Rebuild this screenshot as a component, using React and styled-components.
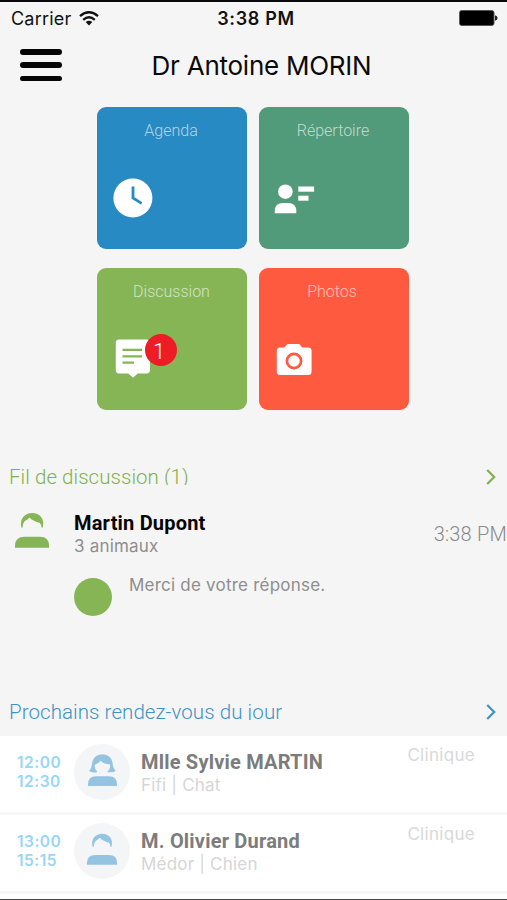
import styled, { createGlobalStyle } from "styled-components";

const GlobalStyle = createGlobalStyle`
    html, body {
        margin: 0;
        padding: 0;
        background-color: #f5f5f5;
    }
    * {
        box-sizing: border-box;
    }
`;

const inter = `Inter, "Liberation Sans", sans-serif`;
const roboto = `Roboto, "Liberation Sans", sans-serif`;

// page
const PageContainer = styled.div`
    width: 507px;
    height: 900px;
    display: flex;
    flex-direction: column;
    overflow: hidden;
    background-color: #f5f5f5;
    border-top: 2px solid #0a0a0c;
    border-bottom: 1px solid #444;
    font-family: ${inter};
`;

// status bar
const StatusBar = styled.div`
    height: 34px;
    display: grid;
    grid-template-columns: 1fr auto 1fr;
    align-items: center;
    padding: 0 9px 2px 11px;
    font-size: 18px;
    line-height: 22px;
    color: #111;
`;

const Carrier = styled.div`
    display: flex;
    align-items: center;
    gap: 8px;
    letter-spacing: 0.2px;

    span {
        padding-top: 1px;
    }
`;

const Clock = styled.div`
    padding: 1px 0 0 3px;
    font-weight: 600;
    letter-spacing: 0.65px;
`;

const BatteryArea = styled.div`
    display: flex;
    justify-content: flex-end;
`;

// header
const Header = styled.div`
    height: 58px;
    display: grid;
    grid-template-columns: 62px 1fr 62px;
    align-items: center;
    margin-bottom: 13px;
`;

const MenuButton = styled.button`
    width: 42px;
    height: 32px;
    margin-left: 20px;
    padding: 0;
    display: flex;
    flex-direction: column;
    justify-content: space-between;
    border: none;
    background: none;
`;

const MenuBar = styled.span`
    width: 42px;
    height: 5.5px;
    border-radius: 3px;
    background-color: #050505;
`;

const Title = styled.h1`
    margin: 0;
    padding: 2px 0 0 16px;
    text-align: center;
    font-size: 26px;
    font-weight: 400;
    line-height: 32px;
    letter-spacing: -0.25px;
    white-space: nowrap;
    color: #0a0a0a;
`;

// tiles
const TileGrid = styled.div`
    display: grid;
    grid-template-columns: 150px 150px;
    grid-auto-rows: 142px;
    gap: 19px 12px;
    margin-left: 97px;
`;

const Tile = styled.div`
    display: flex;
    flex-direction: column;
    border-radius: 9px;
    background-color: ${(props) => props.$color};
`;

const TileLabel = styled.div`
    padding: 14px ${(props) => props.$shift || "2px"} 0 0;
    height: 66px;
    text-align: center;
    font-family: ${roboto};
    font-size: 16px;
    font-weight: 300;
    line-height: 20px;
    color: rgba(255, 255, 255, 0.65);
`;

const TileIcon = styled.div`
    position: relative;
    margin-left: 12px;
    width: 48px;
    height: 50px;
`;

const Badge = styled.div`
    position: absolute;
    left: 35.5px;
    top: 0;
    width: 32px;
    height: 32px;
    border-radius: 50%;
    background-color: #ee1c25;
    font-family: ${roboto};
    font-size: 22px;
    font-weight: 300;
    line-height: 36px;
    text-align: center;
    padding-right: 3px;
    color: white;
`;

// section titles
const SectionHeader = styled.div`
    height: 26px;
    margin-top: ${(props) => props.$top};
    padding: 0 11px 0 9px;
    display: flex;
    align-items: center;
    justify-content: space-between;
    color: ${(props) => props.$color};
`;

const SectionTitle = styled.div`
    height: 20px;
    margin-bottom: 4px;
    overflow: hidden;
    font-family: ${roboto};
    font-size: 20.5px;
    font-weight: 300;
    line-height: 24px;
    letter-spacing: ${(props) => props.$spacing};
    white-space: nowrap;
`;

// discussion thread
const Thread = styled.div`
    height: 55px;
    margin-top: 14px;
    padding-left: 14px;
    display: flex;
`;

const ThreadAvatar = styled.div`
    width: 60px;
    padding-top: 8px;
`;

const ThreadInfo = styled.div`
    flex: 1;
    padding-top: 7px;
`;

const ThreadName = styled.div`
    font-family: ${roboto};
    font-size: 20px;
    font-weight: 700;
    line-height: 24px;
    letter-spacing: 0.2px;
    white-space: nowrap;
    color: #050505;
`;

const ThreadDetail = styled.div`
    font-size: 17px;
    line-height: 22px;
    letter-spacing: 0.2px;
    color: #8e8e8e;
`;

const ThreadTime = styled.div`
    padding: 17px 0 0 0;
    font-family: ${roboto};
    font-size: 20px;
    font-weight: 300;
    line-height: 26px;
    letter-spacing: 0.2px;
    white-space: nowrap;
    color: #8a8a8a;
`;

const Message = styled.div`
    height: 62px;
    padding: 19px 0 0 74px;
    display: flex;
    gap: 17px;
`;

const MessageDot = styled.div`
    width: 38px;
    height: 38px;
    border-radius: 50%;
    background-color: #86b556;
`;

const MessageText = styled.div`
    margin-top: -4px;
    font-size: 17px;
    line-height: 22px;
    letter-spacing: 0.22px;
    color: #8e8e8e;
`;

// appointments
const AppointmentList = styled.div`
    flex: 1;
    margin-top: 11px;
    background-color: white;
`;

const Appointment = styled.div`
    height: 79px;
    padding: 0 32px 0 17px;
    display: flex;
    border-bottom: 3px solid #f7f7f8;
`;

const Hours = styled.div`
    width: 57px;
    padding-top: 17px;
    font-size: 15.5px;
    font-weight: 600;
    line-height: 19px;
    letter-spacing: 0.5px;
    color: #98d6f6;
`;

const AvatarCircle = styled.div`
    width: 56px;
    height: 56px;
    margin-top: 8px;
    padding-bottom: 5px;
    display: flex;
    align-items: center;
    justify-content: center;
    border-radius: 50%;
    background-color: #f3f5f6;
`;

const AppointmentInfo = styled.div`
    flex: 1;
    padding: 14px 0 0 11px;
`;

const ClientName = styled(ThreadName)`
    color: #7c7c7c;
`;

const Pet = styled.div`
    font-size: 17px;
    line-height: 22px;
    letter-spacing: 0.2px;
    color: #d6d6d6;
`;

const Place = styled.div`
    padding-top: 8px;
    font-size: 17px;
    line-height: 22px;
    letter-spacing: 0.3px;
    color: #d9d9d9;
`;

// icons
function WifiIcon() {
    return (
        <svg width="20" height="15" viewBox="0 0 20 15" fill="none" stroke="#111" strokeWidth="2.3">
            <path d="M1 5.1 Q10 -2.5 19 5.1" />
            <path d="M4.2 8.8 Q10 3.7 15.8 8.8" />
            <path d="M10 14.4 L6.7 11 Q10 8.4 13.3 11 Z" fill="#111" stroke="none" />
        </svg>
    );
}

function BatteryIcon() {
    return (
        <svg width="39" height="16" viewBox="0 0 39 16">
            <rect x="0.5" y="0.5" width="34.5" height="15" rx="2.2" fill="#000" stroke="#555" />
            <path d="M36 5.2 Q38.6 6 38.6 8 Q38.6 10 36 10.8 Z" fill="#222" />
        </svg>
    );
}

function ClockIcon() {
    return (
        <svg width="48" height="50" viewBox="0 0 48 50" fill="none">
            <circle cx="23.9" cy="25" r="19.5" fill="white" />
            <path d="M24 13.5 V25 L32.6 30.4" stroke="#288ac2" strokeWidth="2.8" />
        </svg>
    );
}

function ContactIcon() {
    return (
        <svg width="48" height="50" viewBox="0 0 48 50" fill="white">
            <circle cx="14.4" cy="18.7" r="7.3" />
            <path d="M3.8 40.2 V38 Q3.8 30 12 30 H17 Q25.3 30 25.3 38 V40.2 Z" />
            <rect x="27.3" y="13.5" width="15.8" height="5.2" />
            <rect x="27.3" y="22.7" width="10.2" height="5" />
        </svg>
    );
}

function ChatIcon() {
    return (
        <svg width="48" height="50" viewBox="0 0 48 50">
            <path d="M10 5.6 H37.5 Q41 5.6 41 9 V36 Q41 39.4 37.5 39.4 H28.7 L24 43.8 L19.3 39.4 H10 Q6.8 39.4 6.8 36 V9 Q6.8 5.6 10 5.6 Z" fill="white" />
            <path d="M13.5 15.8 H33 M13.5 22.3 H33 M13.5 28.7 H25" stroke="#86b556" strokeWidth="2.3" />
        </svg>
    );
}

function CameraIcon() {
    return (
        <svg width="48" height="50" viewBox="0 0 48 50">
            <path d="M9 13.4 H13.3 L16.4 10 H28.2 L31.2 13.4 H37 Q40.6 13.4 40.6 16.8 V37.5 Q40.6 41 37 41 H9 Q5.8 41 5.8 37.5 V16.8 Q5.8 13.4 9 13.4 Z" fill="white" />
            <circle cx="23" cy="27" r="7.1" fill="none" stroke="#fe5a40" strokeWidth="2.7" />
        </svg>
    );
}

function ManIcon({ size, color }) {
    return (
        <svg width={size} height={size} viewBox="0 0 36 36" fill={color}>
            <path d="M7.4 15.4 C5.2 6.5 11 0.9 18.2 0.9 C25.6 0.9 31 6.5 28.8 15.4 L27.4 15.4 Q27.6 12.6 25.6 10.8 Q22.5 10.2 19.6 8.5 Q17.2 7.3 15.4 5.4 Q13.6 7.7 11.2 8.7 Q8.6 11 8.7 15.4 Z" />
            <path d="M1 35.8 V33.6 Q1.2 24.8 10.5 24.8 H26 Q35 24.8 35 33.6 V35.8 Z" />
        </svg>
    );
}

function WomanIcon({ color }) {
    return (
        <svg width="31" height="32" viewBox="0 0 31 32" fill={color}>
            <path d="M2.2 17 Q4.6 14.5 5.1 9.2 C6 2.7 10.5 0.4 15.2 0.4 C20.3 0.4 24.9 2.9 25.6 9.2 Q26 14.5 28.8 16.8 Q25.8 19.2 20.2 17.9 Q24.2 14.5 23 10.4 Q17 10.4 13.5 6.8 Q11.5 9.6 8 10.4 Q6.8 14.5 10.4 17.9 Q4.8 19.3 2.2 17 Z" />
            <path d="M1 32 V30.5 Q1 22.2 9 22.2 H22 Q30 22.2 30 30.5 V32 Z" />
        </svg>
    );
}

function Chevron() {
    return (
        <svg width="10" height="16" viewBox="0 0 10 16" fill="none" stroke="currentColor" strokeWidth="2.2">
            <path d="M1.2 1 L8.2 8 L1.2 15" />
        </svg>
    );
}

export default function App() {
    return (
        <PageContainer>
            <GlobalStyle />
            <StatusBar>
                <Carrier>
                    <span>Carrier</span>
                    <WifiIcon />
                </Carrier>
                <Clock>3:38 PM</Clock>
                <BatteryArea>
                    <BatteryIcon />
                </BatteryArea>
            </StatusBar>

            <Header>
                <MenuButton aria-label="Menu">
                    <MenuBar />
                    <MenuBar />
                    <MenuBar />
                </MenuButton>
                <Title>Dr Antoine MORIN</Title>
            </Header>

            <TileGrid>
                <Tile $color="#288ac2">
                    <TileLabel>Agenda</TileLabel>
                    <TileIcon>
                        <ClockIcon />
                    </TileIcon>
                </Tile>
                <Tile $color="#529b7a">
                    <TileLabel>Répertoire</TileLabel>
                    <TileIcon>
                        <ContactIcon />
                    </TileIcon>
                </Tile>
                <Tile $color="#86b556">
                    <TileLabel $shift="1px">Discussion</TileLabel>
                    <TileIcon>
                        <ChatIcon />
                        <Badge>1</Badge>
                    </TileIcon>
                </Tile>
                <Tile $color="#fe5a40">
                    <TileLabel $shift="4px">Photos</TileLabel>
                    <TileIcon>
                        <CameraIcon />
                    </TileIcon>
                </Tile>
            </TileGrid>

            <SectionHeader $top="54px" $color="#7fb14c">
                <SectionTitle $spacing="0.05px">Fil de discussion (1)</SectionTitle>
                <Chevron />
            </SectionHeader>

            <Thread>
                <ThreadAvatar>
                    <ManIcon size={36} color="#86b556" />
                </ThreadAvatar>
                <ThreadInfo>
                    <ThreadName>Martin Dupont</ThreadName>
                    <ThreadDetail>3 animaux</ThreadDetail>
                </ThreadInfo>
                <ThreadTime>3:38 PM</ThreadTime>
            </Thread>
            <Message>
                <MessageDot />
                <MessageText>Merci de votre réponse.</MessageText>
            </Message>

            <SectionHeader $top="78px" $color="#3d93c8">
                <SectionTitle $spacing="0.07px">Prochains rendez-vous du jour</SectionTitle>
                <Chevron />
            </SectionHeader>

            <AppointmentList>
                <Appointment>
                    <Hours>
                        <div>12:00</div>
                        <div>12:30</div>
                    </Hours>
                    <AvatarCircle>
                        <WomanIcon color="#94c4e2" />
                    </AvatarCircle>
                    <AppointmentInfo>
                        <ClientName>Mlle Sylvie MARTIN</ClientName>
                        <Pet>Fifi | Chat</Pet>
                    </AppointmentInfo>
                    <Place>Clinique</Place>
                </Appointment>
                <Appointment>
                    <Hours>
                        <div>13:00</div>
                        <div>15:15</div>
                    </Hours>
                    <AvatarCircle>
                        <ManIcon size={32} color="#94c4e2" />
                    </AvatarCircle>
                    <AppointmentInfo>
                        <ClientName>M. Olivier Durand</ClientName>
                        <Pet>Médor | Chien</Pet>
                    </AppointmentInfo>
                    <Place>Clinique</Place>
                </Appointment>
            </AppointmentList>
        </PageContainer>
    );
}
